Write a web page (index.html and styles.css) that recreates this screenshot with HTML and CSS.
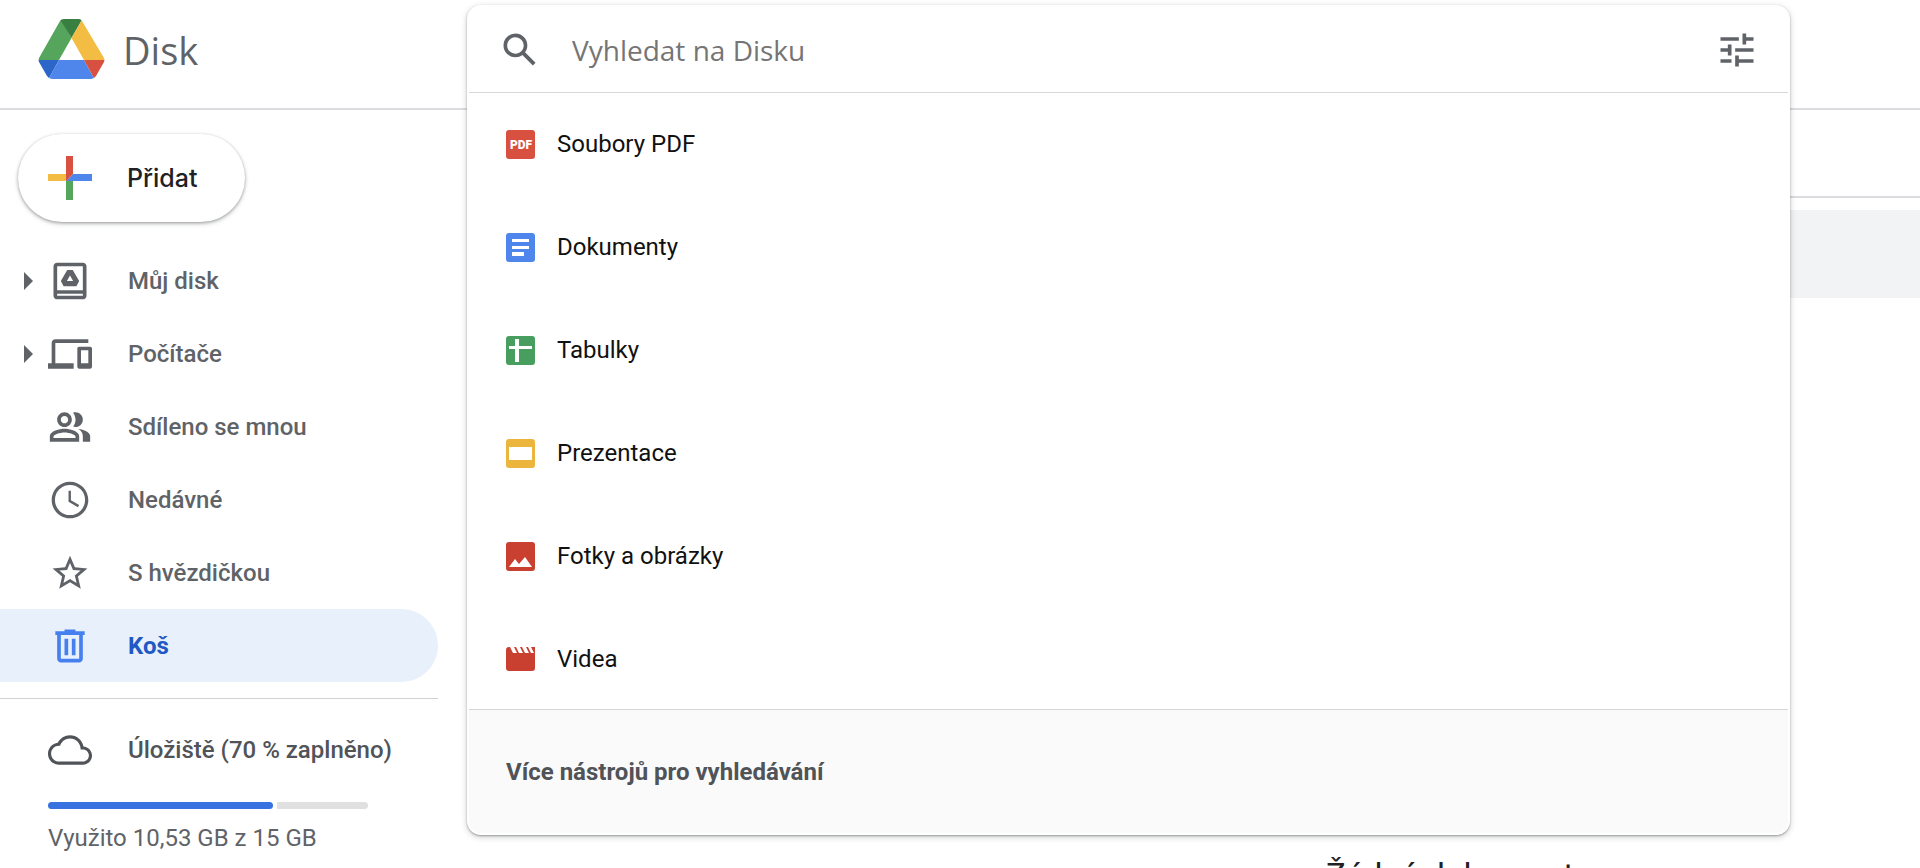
FILE: index.html
```
<!DOCTYPE html>
<html lang="cs">
<head>
    <meta charset="UTF-8">
    <meta name="viewport" content="width=device-width, initial-scale=1.0">
    <title>Koš - Disk</title>
    <link rel="stylesheet" href="styles.css">
</head>
<body>
    <header class="header">
        <a class="brand" href="#">
            <svg class="brand-logo" viewBox="0 0 67 60" aria-hidden="true">
                <clipPath id="logoShape"><path d="M26 0h15q2 0 3 2l22 37q1 2 0 4l-8 14q-2 3-5 3H14q-3 0-5-3L1 43q-1-2 0-4L22 2q1-2 4-2z"/></clipPath>
                <g clip-path="url(#logoShape)">
                    <path fill="#55a65c" d="M22-1L-1 41h22L33.500 19z"/>
                    <path fill="#3a7f42" d="M21-1h24L33.500 19z"/>
                    <path fill="#f2bd42" d="M45-1l23 42H46L33.500 19z"/>
                    <path fill="#2b66c8" d="M-1 41h22L10 61H-1z"/>
                    <path fill="#4f86ec" d="M21 41h25l11 20H10z"/>
                    <path fill="#d85140" d="M46 41h22v20H57z"/>
                </g>
            </svg>
            <span class="brand-name">Disk</span>
        </a>
    </header>

    <div class="layout">
        <aside class="sidebar">
            <button class="add-btn" type="button">
                <svg class="add-icon" viewBox="0 0 44 44" aria-hidden="true">
                    <path fill="#f2bd42" d="M0 18h18l4 7H0z"/>
                    <path fill="#4f86ec" d="M25 18h19v7H18z"/>
                    <path fill="#55a65c" d="M18 25h7v19h-7z"/>
                    <path fill="#d85140" d="M18 0h7v18l-7 7z"/>
                </svg>
                <span>Přidat</span>
            </button>

            <nav class="nav">
                <a class="nav-item" href="#">
                    <svg class="arrow" viewBox="0 0 9 18" aria-hidden="true"><path d="M0 0l9 9-9 9z"/></svg>
                    <svg class="nav-icon" viewBox="0 0 24 24" aria-hidden="true"><path d="M19 2H5c-1.100 0-2 .9-2 2v16c0 1.100.9 2 2 2h14c1.100 0 2-.9 2-2V4c0-1.100-.9-2-2-2zm0 18H5v-1h14v1zm0-3H5V4h14v13z"/><path fill-rule="evenodd" d="M10.500 6h3l3.500 6-1.500 2.800h-7L7 12zM12 9l-1.700 3h3.400z"/></svg>
                    <span>Můj disk</span>
                </a>
                <a class="nav-item" href="#">
                    <svg class="arrow" viewBox="0 0 9 18" aria-hidden="true"><path d="M0 0l9 9-9 9z"/></svg>
                    <svg class="nav-icon" viewBox="0 0 24 24" aria-hidden="true"><path d="M4 6h18V4H4c-1.100 0-2 .9-2 2v11H0v3h14v-3H4V6zm19 2h-6c-.55 0-1 .45-1 1v10c0 .55.45 1 1 1h6c.55 0 1-.45 1-1V9c0-.55-.45-1-1-1zm-1 9h-4v-7h4v7z"/></svg>
                    <span>Počítače</span>
                </a>
                <a class="nav-item" href="#">
                    <span class="arrow"></span>
                    <svg class="nav-icon" viewBox="0 0 24 24" aria-hidden="true"><path d="M9 12c2.210 0 4-1.790 4-4s-1.790-4-4-4-4 1.790-4 4 1.790 4 4 4zm0-6c1.100 0 2 .9 2 2s-.9 2-2 2-2-.9-2-2 .9-2 2-2zM9 13c-2.670 0-8 1.340-8 4v3h16v-3c0-2.660-5.330-4-8-4zm6 5H3v-.990C3.200 16.290 6.300 15 9 15s5.800 1.290 6 2v1zM15 12c2.210 0 4-1.790 4-4s-1.790-4-4-4c-.470 0-.910.100-1.330.240C14.500 5.270 15 6.580 15 8s-.500 2.730-1.330 3.760c.420.140.860.240 1.330.240zM16.700 13.130C18.060 14.060 19 15.320 19 17v3h4v-3c0-2.180-3.580-3.470-6.300-3.870z"/></svg>
                    <span>Sdíleno se mnou</span>
                </a>
                <a class="nav-item" href="#">
                    <span class="arrow"></span>
                    <svg class="nav-icon" viewBox="0 0 24 24" aria-hidden="true"><path d="M11.990 2C6.470 2 2 6.480 2 12s4.470 10 9.990 10C17.520 22 22 17.520 22 12S17.520 2 11.990 2zM12 20.200a8.200 8.200 0 1 1 0-16.400 8.200 8.200 0 0 1 0 16.400zM12.500 7H11.200v6l5.100 2.900.7-1.200-4.500-2.600z"/></svg>
                    <span>Nedávné</span>
                </a>
                <a class="nav-item" href="#">
                    <span class="arrow"></span>
                    <svg class="nav-icon" viewBox="0 0 24 24" aria-hidden="true"><path transform="translate(.6 .7) scale(.95)" d="M22 9.240l-7.190-.620L12 2 9.190 8.630 2 9.240l5.460 4.730L5.820 21 12 17.270 18.180 21l-1.630-7.030L22 9.240zM12 15.400l-3.760 2.270 1-4.280-3.320-2.880 4.380-.380L12 6.100l1.710 4.040 4.380.380-3.320 2.880 1 4.280L12 15.400z"/></svg>
                    <span>S hvězdičkou</span>
                </a>
                <a class="nav-item active" href="#">
                    <span class="arrow"></span>
                    <svg class="nav-icon" viewBox="0 0 24 24" aria-hidden="true"><path fill-rule="evenodd" d="M4 4h5V3h6v1h5v2h-1v13c0 1.100-.9 2-2 2H7c-1.100 0-2-.9-2-2V6H4zm3 2v13h10V6zM9 8h2v9H9zm4 0h2v9h-2z"/></svg>
                    <span>Koš</span>
                </a>
            </nav>

            <section class="storage">
                <a class="storage-link" href="#">
                    <svg class="nav-icon" viewBox="0 0 24 24" aria-hidden="true"><path d="M19.350 10.040C18.670 6.590 15.640 4 12 4 9.110 4 6.600 5.640 5.350 8.040 2.340 8.360 0 10.910 0 14c0 3.310 2.690 6 6 6h13c2.760 0 5-2.240 5-5 0-2.640-2.050-4.780-4.650-4.960zM19 18.300H6c-2.380 0-4.300-1.920-4.300-4.300S3.620 9.700 6 9.700h.6C7.200 7.400 9.400 5.700 12 5.700c3.200 0 5.800 2.600 5.800 5.800v.2H19c1.820 0 3.300 1.480 3.300 3.300s-1.480 3.300-3.300 3.300z"/></svg>
                    <span>Úložiště (70 % zaplněno)</span>
                </a>
                <div class="storage-bar">
                    <div class="storage-used" style="width: 70.200%"></div>
                    <div class="storage-free"></div>
                </div>
                <p class="storage-text">Využito 10,53 GB z 15 GB</p>
            </section>
        </aside>

        <main class="content">
            <div class="toolbar"></div>
            <div class="notice"></div>
            <h2 class="empty-title">Žádné dokumenty</h2>
        </main>
    </div>

    <!-- Search dropdown -->
    <div class="search-panel">
        <form class="search-bar">
            <button class="icon-btn" type="submit" aria-label="Vyhledat">
                <svg viewBox="0 0 24 24" aria-hidden="true"><path d="M20.490 19l-5.730-5.730C15.530 12.200 16 10.910 16 9.500A6.500 6.500 0 1 0 9.500 16c1.410 0 2.700-.470 3.770-1.240L19 20.490 20.490 19zM5 9.500C5 7.010 7.010 5 9.500 5S14 7.010 14 9.500 11.990 14 9.500 14 5 11.990 5 9.500z"/></svg>
            </button>
            <input class="search-input" type="text" placeholder="Vyhledat na Disku" aria-label="Vyhledat na Disku">
            <button class="icon-btn" type="button" aria-label="Možnosti vyhledávání">
                <svg viewBox="0 0 24 24" aria-hidden="true"><path d="M3 17v2h6v-2H3zM3 5v2h10V5H3zm10 16v-2h8v-2h-8v-2h-2v6h2zM7 9v2H3v2h4v2h2V9H7zm14 4v-2H11v2h10zm-6-4h2V7h4V5h-4V3h-2v6z"/></svg>
            </button>
        </form>

        <ul class="type-list">
            <li><a class="type-item" href="#">
                <svg class="type-icon" viewBox="0 0 29 29" aria-hidden="true"><rect width="29" height="29" rx="3" fill="#d85140"/><text class="pdf-label" x="15" y="19" text-anchor="middle">PDF</text></svg>
                <span>Soubory PDF</span>
            </a></li>
            <li><a class="type-item" href="#">
                <svg class="type-icon" viewBox="0 0 29 29" aria-hidden="true"><rect width="29" height="29" rx="3" fill="#4f86ec"/><path fill="#fff" d="M6 6h17v3H6zm0 7h17v3H6zm0 6h12v4H6z"/></svg>
                <span>Dokumenty</span>
            </a></li>
            <li><a class="type-item" href="#">
                <svg class="type-icon" viewBox="0 0 29 29" aria-hidden="true"><rect width="29" height="29" rx="3" fill="#489e5e"/><path fill="#fff" d="M3 10h6V3h4v7h13v3H13v13H9V13H3z"/></svg>
                <span>Tabulky</span>
            </a></li>
            <li><a class="type-item" href="#">
                <svg class="type-icon" viewBox="0 0 29 29" aria-hidden="true"><rect width="29" height="29" rx="3" fill="#ecb53d"/><path fill="#fff" d="M3 8h23v13H3z"/></svg>
                <span>Prezentace</span>
            </a></li>
            <li><a class="type-item" href="#">
                <svg class="type-icon" viewBox="0 0 29 29" aria-hidden="true"><rect width="29" height="29" rx="3" fill="#c93f30"/><path fill="#fff" d="M3 25l6-8 4 5 6-7 7 10z"/></svg>
                <span>Fotky a obrázky</span>
            </a></li>
            <li><a class="type-item" href="#">
                <svg class="type-icon" viewBox="0 0 29 29" aria-hidden="true"><path fill="#c93f30" d="M3 2h26v21q0 3-3 3H3q-3 0-3-3V5q0-3 3-3z"/><path fill="#fff" d="M4 2h4l3 6H7zm6 0h4l3 6h-4zm6 0h4l3 6h-4zm6 0h3l3 6h-3z"/></svg>
                <span>Videa</span>
            </a></li>
        </ul>

        <div class="search-footer">
            <a class="more-link" href="#">Více nástrojů pro vyhledávání</a>
        </div>
    </div>
</body>
</html>
```
FILE: styles.css
```
/* General Reset */
* {
    margin: 0;
    padding: 0;
    box-sizing: border-box;
}

body {
    height: 100vh;
    overflow: hidden;
    background-color: #fff;
    color: #5f6368;
    font-family: Roboto, Arial, sans-serif;
    font-size: 24px;
    line-height: 32px;
}

a {
    color: inherit;
    text-decoration: none;
}

button {
    border: none;
    background: none;
    cursor: pointer;
}

svg {
    display: block;
    flex-shrink: 0;
    fill: currentColor;
}

/* Header */
.header {
    height: 110px;
    padding: 19px 38px;
    border-bottom: 2px solid #dadce0;
}

.brand {
    display: inline-flex;
    gap: 18px;
}

.brand-logo {
    width: 67px;
    height: 60px;
}

.brand-name {
    font-family: "Open Sans", Arial, sans-serif;
    font-size: 38px;
    line-height: 62px;
}

.layout {
    display: flex;
}

/* Sidebar */
.sidebar {
    width: 438px;
    flex-shrink: 0;
    padding-top: 24px;
}

.add-btn {
    display: flex;
    align-items: center;
    gap: 35px;
    height: 88px;
    margin: 0 0 22px 18px;
    padding: 0 48px 0 30px;
    border-radius: 44px;
    box-shadow: 0 1px 3px rgba(60, 64, 67, 0.4), 0 2px 5px rgba(60, 64, 67, 0.2);
    color: #202124;
    font-family: Inter, Arial, sans-serif;
    font-size: 25px;
    font-weight: 500;
}

.add-icon {
    width: 44px;
    height: 44px;
}

.nav-item {
    display: flex;
    align-items: center;
    height: 73px;
    padding-left: 24px;
    font-weight: 500;
}

.nav-item.active {
    border-radius: 0 37px 37px 0;
    background-color: #e8f0fc;
    color: #2159c4;
    font-weight: 700;
}

.nav-item.active .nav-icon {
    color: #4680ee;
}

.arrow {
    width: 9px;
    height: 18px;
    margin-right: 15px;
}

.nav-icon {
    width: 44px;
    height: 44px;
    margin-right: 36px;
}

/* Storage */
.storage {
    margin-top: 16px;
    padding: 29px 70px 0 48px;
    border-top: 1px solid #d0d2d5;
}

.storage-link {
    display: flex;
    align-items: center;
    color: #505357;
    white-space: nowrap;
    font-weight: 500;
}

.storage-bar {
    display: flex;
    gap: 4px;
    height: 7px;
    margin: 30px 0 13px;
}

.storage-used {
    border-radius: 4px;
    background-color: #3871e0;
}

.storage-free {
    flex: 1;
    border-radius: 0 4px 4px 0;
    background-color: #e0e0e0;
}

.storage-text {
    white-space: nowrap;
}

/* Content */
.content {
    flex: 1;
    margin-left: 42px;
}

.toolbar {
    height: 88px;
    border-bottom: 2px solid #dadce0;
}

.notice {
    height: 88px;
    margin-top: 12px;
    background-color: #f1f3f4;
}

.empty-title {
    margin-top: 556px;
    padding-left: 846px;
    color: #202124;
    font-size: 33px;
    font-weight: 400;
    line-height: 44px;
}

/* Search dropdown, lies over the page */
.search-panel {
    position: absolute;
    top: 5px;
    left: 467px;
    right: 130px;
    border: 2px solid #fff;
    border-radius: 14px;
    background-color: #fff;
    box-shadow: 0 1px 2px rgba(60, 64, 67, 0.4), 0 2px 6px rgba(60, 64, 67, 0.25);
}

.search-bar {
    display: flex;
    align-items: center;
    height: 86px;
    padding: 0 29px;
    border-bottom: 1px solid #d5d7da;
}

.icon-btn {
    width: 44px;
    height: 44px;
    color: #5f6368;
}

.search-input {
    flex: 1;
    margin-left: 30px;
    border: none;
    outline: none;
    color: #202124;
    font-family: "Open Sans", Arial, sans-serif;
    font-size: 28px;
}

.search-input::placeholder {
    color: #757575;
}

.type-list {
    display: flex;
    flex-direction: column;
    gap: 5px;
    padding: 2px 0 1px;
    list-style: none;
}

.type-item {
    display: flex;
    align-items: center;
    gap: 22px;
    height: 98px;
    padding-left: 37px;
    color: #111;
}

.type-icon {
    width: 29px;
    height: 29px;
}

.pdf-label {
    fill: #fff;
    font-size: 12px;
    font-weight: 900;
}

.search-footer {
    padding: 46px 37px 45px;
    border-top: 1px solid #d5d7da;
    border-radius: 0 0 12px 12px;
    background-color: #fafafa;
}

.more-link {
    color: #505357;
    font-weight: 700;
}
```
